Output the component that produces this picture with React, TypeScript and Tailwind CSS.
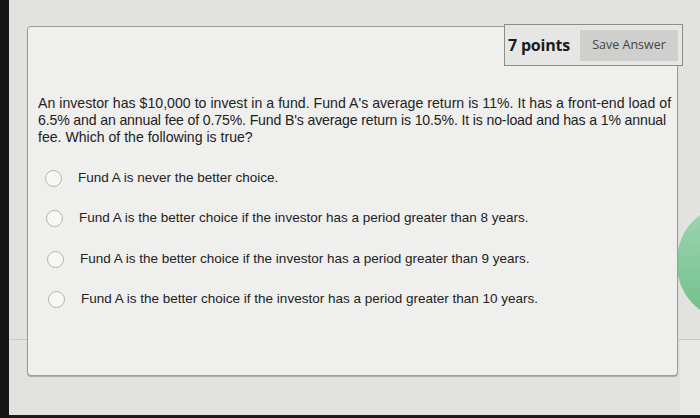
export default function App() {
  const options = [
    "Fund A is never the better choice.",
    "Fund A is the better choice if the investor has a period greater than 8 years.",
    "Fund A is the better choice if the investor has a period greater than 9 years.",
    "Fund A is the better choice if the investor has a period greater than 10 years.",
  ]

  return (
    <div
      className="w-[700px] h-[418px] flex overflow-hidden bg-[#1b1b1b]"
      style={{ fontFamily: '"Liberation Sans", Arial, sans-serif' }}
    >
      <div className="w-[9px] shrink-0 bg-[#161616]" />
      <div className="relative flex-1 h-[415px] bg-[#e2e3e0]">
        {/* faint rule behind the card */}
        <div className="absolute left-0 right-0 top-[339px] border-t border-[#c9cac7]" />
        {/* green thing peeking at right */}
        <div className="absolute left-[668px] top-[205px] w-[110px] h-[115px] rounded-full bg-gradient-to-b from-[#9fd5b0] to-[#6fbf89]" />
        <div className="absolute left-[671px] top-[340px] w-[30px] h-[75px] bg-[#e9eae7]" />

        <div className="relative ml-[18px] mt-[26px] w-[651px] h-[350px] rounded-[4px] border border-[#9c9d9a] bg-[#efefed] shadow-[0_1px_1px_rgba(0,0,0,0.25)]">
          {/* points + save */}
          <div className="absolute right-[-6px] top-[-3px] h-[42px] w-[179px] flex items-center gap-[10px] border border-[#8d8e8b] bg-[#e6e7e4] pl-[3px] pr-[4px]">
            <span className="text-[16px] font-bold text-[#1c1c1c] tracking-[-0.2px]" style={{ fontFamily: '"Open Sans", sans-serif' }}>
              7 points
            </span>
            <button className="h-[31px] flex-1 bg-[#cfd0cd] text-[12.5px] text-[#454545]" style={{ fontFamily: '"Open Sans", sans-serif' }}>
              Save Answer
            </button>
          </div>

          <p className="mt-[68px] ml-[10px] whitespace-nowrap text-[14.1px] leading-[17px] text-[#222]">
            <span className="block tracking-[0.03px]">
              An investor has $10,000 to invest in a fund. Fund A's average return is 11%. It has a front-end load of
            </span>
            <span className="block tracking-[-0.14px]">
              6.5% and an annual fee of 0.75%. Fund B's average return is 10.5%. It is no-load and has a 1% annual
            </span>
            <span className="block">fee. Which of the following is true?</span>
          </p>

          <div className="mt-[24px] ml-[17px] flex flex-col gap-[24.5px]">
            {options.map((o, i) => (
              <label key={i} className="flex items-center gap-[16px] h-[16px]" style={{ marginLeft: i }}>
                <span className="w-[17px] h-[17px] rounded-full border border-[#b4b5b2] bg-[#f7f7f5]" />
                <span className="text-[13.5px] text-[#222]">{o}</span>
              </label>
            ))}
          </div>
        </div>
      </div>
    </div>
  )
}
